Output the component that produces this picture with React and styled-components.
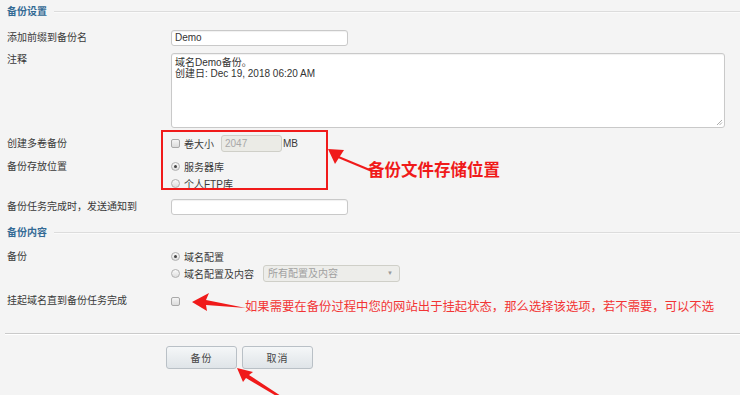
import React from "react";
import styled, { createGlobalStyle } from "styled-components";

const Global = createGlobalStyle`
  html, body { margin: 0; padding: 0; background: #f4f4f4; }
  body { width: 740px; height: 395px; overflow: hidden; font-family: "Liberation Sans", "Noto Sans CJK SC", sans-serif; font-size: 10px; color: #3a3a3a; }
`;

const Page = styled.div`
  position: relative;
  width: 740px;
  height: 395px;
  display: flex;
  flex-direction: column;
`;

const SectionHead = styled.div`
  display: flex;
  align-items: center;
  height: 24px;
  padding-left: 7px;
  margin-top: ${(p) => p.$mt || 0}px;
`;

const SectionTitle = styled.span`
  font-weight: bold;
  color: #336a94;
  font-size: 10px;
  line-height: 12px;
`;

const SectionLine = styled.div`
  flex: 1;
  margin-left: 7px;
  border-top: 1px solid #dcdcdc;
  border-bottom: 1px solid #fafafa;
`;

const Row = styled.div`
  display: grid;
  grid-template-columns: 164px 1fr;
  align-items: start;
  padding-left: 7px;
  margin-top: ${(p) => p.$mt || 0}px;
`;

const Label = styled.div`
  line-height: ${(p) => p.$lh || 16}px;
  padding-top: ${(p) => p.$pt || 0}px;
  color: #3a3a3a;
  white-space: nowrap;
`;

const Field = styled.div`
  display: flex;
  flex-direction: column;
`;

const Line = styled.div`
  display: flex;
  align-items: center;
  height: ${(p) => p.$h || 17}px;
`;

const TextInput = styled.div`
  box-sizing: border-box;
  width: 177px;
  height: 16px;
  background: #fff;
  border: 1px solid #c9c9c9;
  border-radius: 3px;
  box-shadow: inset 0 1px 1px rgba(0,0,0,0.06);
  padding: 0 3px;
  line-height: 14px;
  color: #333;
`;

const TextArea = styled.div`
  position: relative;
  box-sizing: border-box;
  width: 554px;
  height: 75px;
  background: #fff;
  border: 1px solid #c9c9c9;
  border-radius: 3px;
  box-shadow: inset 0 1px 1px rgba(0,0,0,0.06);
  padding: 3px 3px;
  line-height: 11px;
  color: #333;
`;

const Grip = styled.svg`
  position: absolute;
  right: 1px;
  bottom: 1px;
`;

const SmallInput = styled.div`
  box-sizing: border-box;
  width: 61px;
  height: 17px;
  margin-left: 7px;
  background: #ebebe6;
  border: 1px solid #cfcfc8;
  border-radius: 3px;
  padding: 0 3px;
  line-height: 15px;
  color: #a8a8a8;
`;

const Check = styled.span`
  box-sizing: border-box;
  width: 9px;
  height: 9px;
  border: 1px solid #a9a9a9;
  border-radius: 2px;
  background: linear-gradient(#f4f4f4, #dcdcdc);
  margin-right: 4px;
  flex: none;
`;

const Radio = styled.span`
  box-sizing: border-box;
  position: relative;
  width: 9px;
  height: 9px;
  border: 1px solid #b0b0b0;
  border-radius: 50%;
  background: linear-gradient(#fafafa, #dedede);
  margin-right: 4px;
  flex: none;
  &::after {
    content: "";
    display: ${(p) => (p.$on ? "block" : "none")};
    position: absolute;
    left: 2px;
    top: 2px;
    width: 3px;
    height: 3px;
    border-radius: 50%;
    background: #444;
  }
`;

const Text = styled.span`
  color: #3a3a3a;
  margin-left: ${(p) => p.$ml || 0}px;
`;

const Select = styled.div`
  box-sizing: border-box;
  position: relative;
  width: 137px;
  height: 17px;
  margin-left: 9px;
  background: #ededea;
  border: 1px solid #cfcfc8;
  border-radius: 3px;
  padding: 0 4px;
  line-height: 15px;
  color: #a0a0a0;
  &::after {
    content: "▼";
    position: absolute;
    right: 6px;
    top: 0;
    font-size: 6px;
    color: #999;
  }
`;

const Footer = styled.div`
  margin-top: 24px;
  margin-left: 5px;
  border-top: 1px solid #cacaca;
  border-bottom: 1px solid #ffffff;
`;

const Buttons = styled.div`
  display: flex;
  gap: 5px;
  padding-left: 166px;
  margin-top: 11px;
`;

const Button = styled.div`
  box-sizing: border-box;
  width: 71px;
  height: 23px;
  border: 1px solid #b9c0c6;
  border-radius: 3px;
  background: linear-gradient(#f5f7f8, #dfe4e8);
  color: #444;
  display: flex;
  align-items: center;
  justify-content: center;
  letter-spacing: 1px;
`;

const RedBox = styled.div`
  position: absolute;
  left: 161px;
  top: 130px;
  width: 167px;
  height: 60px;
  box-sizing: border-box;
  border: 2px solid #f01a1a;
`;

const Note = styled.div`
  position: absolute;
  left: ${(p) => p.$x}px;
  top: ${(p) => p.$y}px;
  color: ${(p) => p.$c};
  font-family: "Noto Sans CJK SC", sans-serif;
  font-size: ${(p) => p.$fs}px;
  font-weight: ${(p) => p.$fw};
  line-height: 1;
  white-space: nowrap;
`;

const Overlay = styled.svg`
  position: absolute;
  left: 0;
  top: 0;
  pointer-events: none;
`;

export default function App() {
  return (
    <>
      <Global />
      <Page>
        <SectionHead>
          <SectionTitle>备份设置</SectionTitle>
          <SectionLine />
        </SectionHead>

        <Row $mt={6}>
          <Label>添加前缀到备份名</Label>
          <Field>
            <TextInput>Demo</TextInput>
          </Field>
        </Row>

        <Row $mt={7}>
          <Label $pt={1} $lh={11}>注释</Label>
          <Field>
            <TextArea>
              域名Demo备份。
              <br />
              创建日: Dec 19, 2018 06:20 AM
              <Grip width="7" height="7" viewBox="0 0 7 7">
                <path d="M6 1 L1 6 M6 3.5 L3.5 6" stroke="#999" strokeWidth="0.8" />
              </Grip>
            </TextArea>
          </Field>
        </Row>

        <Row $mt={7}>
          <Label $lh={17}>创建多卷备份</Label>
          <Field>
            <Line>
              <Check />
              <Text>卷大小</Text>
              <SmallInput>2047</SmallInput>
              <Text $ml={1}>MB</Text>
            </Line>
          </Field>
        </Row>

        <Row $mt={6}>
          <Label $lh={17}>备份存放位置</Label>
          <Field>
            <Line>
              <Radio $on />
              <Text>服务器库</Text>
            </Line>
            <Line>
              <Radio />
              <Text>个人FTP库</Text>
            </Line>
          </Field>
        </Row>

        <Row $mt={7}>
          <Label>备份任务完成时，发送通知到</Label>
          <Field>
            <TextInput />
          </Field>
        </Row>

        <SectionHead $mt={6}>
          <SectionTitle>备份内容</SectionTitle>
          <SectionLine />
        </SectionHead>

        <Row $mt={3}>
          <Label $lh={17}>备份</Label>
          <Field>
            <Line>
              <Radio $on />
              <Text>域名配置</Text>
            </Line>
            <Line>
              <Radio />
              <Text>域名配置及内容</Text>
              <Select>所有配置及内容</Select>
            </Line>
          </Field>
        </Row>

        <Row $mt={11}>
          <Label>挂起域名直到备份任务完成</Label>
          <Field>
            <Line $h={16}>
              <Check />
            </Line>
          </Field>
        </Row>

        <Footer />
        <Buttons>
          <Button>备份</Button>
          <Button>取消</Button>
        </Buttons>

        <RedBox />
        <Note $x={368} $y={161} $c="#f01a1a" $fs={16.5} $fw={700}>
          备份文件存储位置
        </Note>
        <Note $x={245} $y={300} $c="#f23434" $fs={12.35} $fw={400}>
          如果需要在备份过程中您的网站出于挂起状态，那么选择该选项，若不需要，可以不选
        </Note>

        <Overlay width="740" height="395" viewBox="0 0 740 395">
          <line x1="372" y1="171" x2="336" y2="156" stroke="#f01a1a" strokeWidth="2" />
          <polygon points="328,149 344,150 335,164" fill="#f01a1a" />
          <polygon points="192,302 209,293 206,300 246,308 206,305 207,311" fill="#f01a1a" />
          <polygon points="237,368 253,372 249,375 281,396 278,397 246,378 243,382" fill="#f01a1a" />
        </Overlay>
      </Page>
    </>
  );
}
